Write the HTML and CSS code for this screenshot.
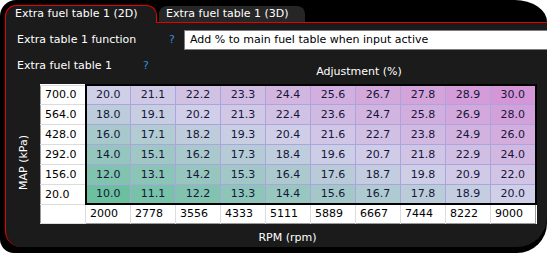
FILE: index.html
```html
<!DOCTYPE html>
<html lang="en">
<head>
    <meta charset="UTF-8">
    <title>Extra fuel table 1</title>
    <link rel="stylesheet" href="styles.css">
</head>
<body>
    <div class="window">
        <div class="tabs">
            <div class="tab tab-active">Extra fuel table 1 (2D)</div>
            <div class="tab">Extra fuel table 1 (3D)</div>
        </div>

        <div class="panel">
            <div class="field-row">
                <span class="field-label">Extra table 1 function</span>
                <span class="help">?</span>
                <div class="select-box">Add % to main fuel table when input active</div>
            </div>

            <div class="table-head">
                <span class="field-label field-label-short">Extra fuel table 1</span>
                <span class="help help-wide">?</span>
                <div class="table-title">Adjustment (%)</div>
            </div>

            <div class="table-area">
                <div class="y-label"><span>MAP (kPa)</span></div>
                <div class="table-col">
                    <table class="map-table">
                        <colgroup>
                            <col class="col-head">
                            <col><col><col><col><col><col><col><col><col><col>
                        </colgroup>
                        <tr class="first-row">
                            <th>700.0</th>
                            <td class="cell">20.0</td><td class="cell">21.1</td><td class="cell">22.2</td><td class="cell">23.3</td><td class="cell">24.4</td>
                            <td class="cell">25.6</td><td class="cell">26.7</td><td class="cell">27.8</td><td class="cell">28.9</td><td class="cell">30.0</td>
                        </tr>
                        <tr>
                            <th>564.0</th>
                            <td class="cell">18.0</td><td class="cell">19.1</td><td class="cell">20.2</td><td class="cell">21.3</td><td class="cell">22.4</td>
                            <td class="cell">23.6</td><td class="cell">24.7</td><td class="cell">25.8</td><td class="cell">26.9</td><td class="cell">28.0</td>
                        </tr>
                        <tr>
                            <th>428.0</th>
                            <td class="cell">16.0</td><td class="cell">17.1</td><td class="cell">18.2</td><td class="cell">19.3</td><td class="cell">20.4</td>
                            <td class="cell">21.6</td><td class="cell">22.7</td><td class="cell">23.8</td><td class="cell">24.9</td><td class="cell">26.0</td>
                        </tr>
                        <tr>
                            <th>292.0</th>
                            <td class="cell">14.0</td><td class="cell">15.1</td><td class="cell">16.2</td><td class="cell">17.3</td><td class="cell">18.4</td>
                            <td class="cell">19.6</td><td class="cell">20.7</td><td class="cell">21.8</td><td class="cell">22.9</td><td class="cell">24.0</td>
                        </tr>
                        <tr>
                            <th>156.0</th>
                            <td class="cell">12.0</td><td class="cell">13.1</td><td class="cell">14.2</td><td class="cell">15.3</td><td class="cell">16.4</td>
                            <td class="cell">17.6</td><td class="cell">18.7</td><td class="cell">19.8</td><td class="cell">20.9</td><td class="cell">22.0</td>
                        </tr>
                        <tr class="last-row">
                            <th>20.0</th>
                            <td class="cell">10.0</td><td class="cell">11.1</td><td class="cell">12.2</td><td class="cell">13.3</td><td class="cell">14.4</td>
                            <td class="cell">15.6</td><td class="cell">16.7</td><td class="cell">17.8</td><td class="cell">18.9</td><td class="cell">20.0</td>
                        </tr>
                        <tr class="axis-row">
                            <th></th>
                            <td>2000</td><td>2778</td><td>3556</td><td>4333</td><td>5111</td>
                            <td>5889</td><td>6667</td><td>7444</td><td>8222</td><td>9000</td>
                        </tr>
                    </table>
                    <div class="x-label">RPM (rpm)</div>
                </div>
            </div>
        </div>
    </div>
    <script src="script.js"></script>
</body>
</html>
```

FILE: styles.css
```css
:root {
    --frame-bg: #000000;
    --panel-bg: #1b1b1b;
    --tab-bg: #262626;
    --accent-red: #e60000;
    --help-blue: #3090e0;
    --grid-line: #aaa5de;
    --head-line: #dcdcdc;
    --cell-text: #16163a;
}

* {
    box-sizing: border-box;
}

body {
    margin: 0;
    background-color: #ffffff;
    font-family: "DejaVu Sans", Verdana, sans-serif;
    font-size: 11px;
    color: #ffffff;
}

.window {
    width: 547px;
    height: 253px;
    padding: 5px 0 6px 5px;
    background-color: var(--frame-bg);
    border-radius: 16px 32px 30px 14px;
    border-top-right-radius: 32px 22px;
    overflow: hidden;
    display: flex;
    flex-direction: column;
}

/* Вкладки */
.tabs {
    display: flex;
    height: 17px;
    flex-shrink: 0;
}

.tab {
    width: 146px;
    height: 16px;
    margin-top: 1px;
    margin-left: 2px;
    padding-left: 7px;
    line-height: 16px;
    background-color: var(--tab-bg);
    border-radius: 8px 8px 0 0;
    white-space: nowrap;
}

.tab-active {
    position: relative;
    z-index: 1;
    width: 152px;
    height: 18px;
    margin: 0 0 -1px 0;
    padding-left: 9px;
    background-color: var(--panel-bg);
    border: 1px solid var(--accent-red);
    border-bottom: none;
    border-radius: 11px 10px 0 0;
}

/* Панель */
.panel {
    flex: 1;
    padding-left: 11px;
    background-color: var(--panel-bg);
    border-top: 1px solid var(--accent-red);
    border-left: 1px solid var(--accent-red);
    border-radius: 0 0 30px 16px;
}

.field-row {
    display: flex;
    align-items: center;
    height: 20px;
    margin-top: 7px;
}

.field-label {
    width: 152px;
    line-height: 14px;
    white-space: nowrap;
}

.field-label-short {
    width: 126px;
}

.help {
    width: 15px;
    line-height: 14px;
    color: var(--help-blue);
}

.help-wide {
    width: 41px;
}

.select-box {
    flex: 1;
    height: 20px;
    margin-right: -20px;
    padding-left: 5px;
    line-height: 18px;
    color: #000000;
    background-color: #ffffff;
    border: 1px solid #7c7c7c;
    white-space: nowrap;
}

.table-head {
    display: flex;
    align-items: flex-start;
    margin-top: 9px;
}

.table-title {
    width: 350px;
    margin-top: 6px;
    line-height: 14px;
    text-align: center;
}

/* Таблица */
.table-area {
    display: flex;
    margin-top: 5px;
    margin-left: -11px;
}

.y-label {
    width: 34px;
    height: 156px;
    display: flex;
    align-items: center;
    justify-content: center;
}

.y-label span {
    writing-mode: vertical-rl;
    transform: rotate(180deg);
    white-space: nowrap;
}

.table-col {
    width: 495px;
}

.map-table {
    width: 495px;
    table-layout: fixed;
    border-collapse: collapse;
    background-color: #ffffff;
    border-left: 1px solid #9a9a9a;
    border-bottom: 1px solid #9a9a9a;
}

.map-table col {
    width: 45px;
}

.map-table th,
.map-table td {
    height: 20px;
    padding: 0;
    font-weight: normal;
    white-space: nowrap;
}

.map-table .first-row > *,
.map-table .axis-row > * {
    height: 19px;
}

.map-table th {
    padding-left: 4px;
    text-align: left;
    color: #000000;
    border-top: 1px solid var(--head-line);
    border-bottom: 1px solid var(--head-line);
}

.map-table .cell {
    text-align: center;
    color: var(--cell-text);
    border: 1px solid var(--grid-line);
}

.map-table tr > .cell:nth-child(2) {
    border-left: 2px solid #000000;
}

.map-table tr > .cell:last-child {
    border-right: 2px solid #000000;
}

.map-table .first-row .cell {
    border-top: 2px solid #000000;
}

.map-table .last-row .cell {
    border-bottom: 2px solid #000000;
}

.axis-row td {
    padding-left: 4px;
    color: #000000;
    border-left: 1px solid var(--head-line);
    border-right: 1px solid var(--head-line);
}

.axis-row td:last-child {
    border-right: 1px solid #9a9a9a;
}

.x-label {
    margin-top: 7px;
    line-height: 14px;
    text-align: center;
}
```

FILE: script.js
```js
// Цвет ячейки по значению: зелёный -> лавандовый -> розовый
var LOW = [108, 192, 160];
var MID = [208, 207, 232];
var HIGH = [212, 150, 214];

function mix(a, b, t) {
    return a.map(function (v, i) {
        return Math.round(v + (b[i] - v) * t);
    });
}

function cellColor(value) {
    var t = Math.min(Math.max((value - 10) / 20, 0), 1);
    var rgb = t < 0.5 ? mix(LOW, MID, t * 2) : mix(MID, HIGH, (t - 0.5) * 2);
    return 'rgb(' + rgb.join(',') + ')';
}

document.querySelectorAll('.map-table .cell').forEach(function (td) {
    td.style.backgroundColor = cellColor(parseFloat(td.textContent));
});
```
